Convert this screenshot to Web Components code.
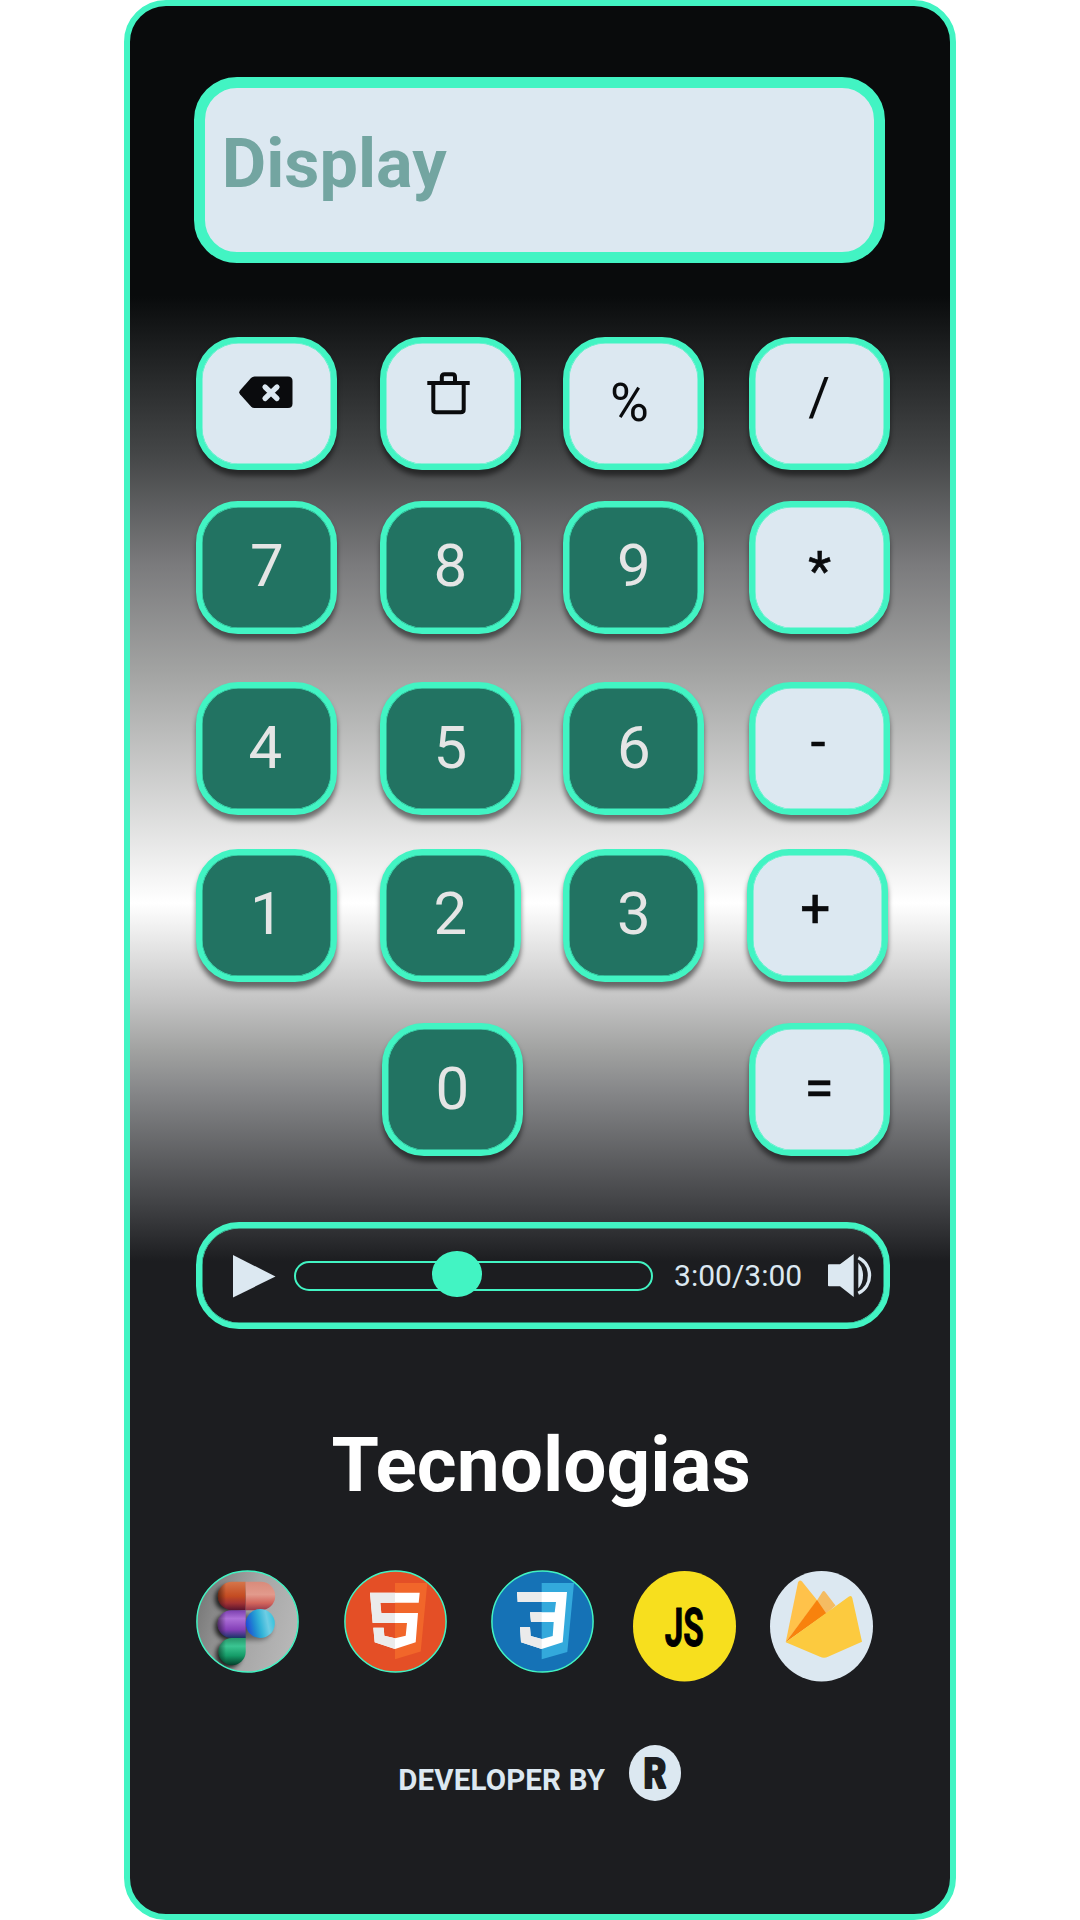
<!DOCTYPE html>
<html lang="pt">
<head>
<meta charset="utf-8">
<title>Calculadora</title>
<style>
html,body{margin:0;padding:0;background:#fff;width:1080px;height:1920px;overflow:hidden}
body{font-family:Roboto,"Liberation Sans",sans-serif;--green:#42f4c3;--ice:#dce8f1;--ink:#0a0b0d;display:flex;justify-content:center}
</style>
</head>
<body>
<calc-app></calc-app>
<script>
const define=(name,html)=>{
  const t=document.createElement('template');
  t.innerHTML=html;
  customElements.define(name,class extends HTMLElement{
    constructor(){super();this.attachShadow({mode:'open'}).append(t.content.cloneNode(true));}
  });
};

define('calc-display',`<style>
:host{display:block;box-sizing:border-box;width:691px;height:186px;border:11px solid var(--green);border-radius:43px;background:var(--ice);
padding:36.700px 0 0 16.500px;font-size:68.400px;line-height:80px;font-weight:700;color:#73a5a1;margin-left:-2px}
</style><slot></slot>`);

define('calc-key',`<style>
:host{display:flex;box-sizing:border-box;justify-content:center;align-items:flex-start;flex:none;width:141px;height:133px;border:6px solid var(--green);border-radius:42px;
background:var(--ice);color:var(--ink);font-size:53px;line-height:60px;padding-top:var(--drop,24px);padding-right:var(--pull,0);box-shadow:inset 0 0 0 .5px var(--green),0 5.500px 5.500px rgba(0,0,0,.5)}
:host([num]){background:#227362;color:#e5e5e5;font-size:60px;line-height:72px;padding-top:23.300px}
:host([sign]){-webkit-text-stroke:.6px var(--ink)}
</style><slot></slot>`);

define('calc-row',`<style>
:host{display:flex;height:133px;gap:42.500px}
</style><slot></slot>`);

define('backspace-icon',`<style>:host{display:block}svg{display:block}</style>
<svg width="54" height="33" viewBox="0 0 54 33"><path d="M15.5 .4H49Q53.5 .4 53.5 5V27.500Q53.500 32 49 32H15.500Q13.500 32 12 30.500L1 18.200Q-.5 16.300 1 14.400L12 2Q13.500 .4 15.500 .4Z" fill="#0a0b0d"/><path d="M26 11L38 22.500M38 11L26 22.500" stroke="#dce8f1" stroke-width="5.200" stroke-linecap="round"/></svg>`);

define('trash-icon',`<style>:host{display:block}svg{display:block}</style>
<svg width="44" height="43" viewBox="0 0 44 43" fill="none" stroke="#0a0b0d"><path d="M.3 11H42.700" stroke-width="4"/><path d="M6.300 11V37.500Q6.300 40.300 9.200 40.300H33.800Q36.700 40.300 36.700 37.500V11" stroke-width="4"/><path d="M14.800 11V5Q14.800 2.200 17.500 2.200H25.500Q28 2.200 28 5V11" stroke-width="4"/></svg>`);

define('audio-player',`<style>
:host{display:flex;box-sizing:border-box;align-items:center;width:693.7px;height:107px;border:6px solid var(--green);border-radius:43px;padding:1px 0 0 31px;color:var(--ice);box-shadow:inset 0 0 0 .5px var(--green)}
svg{display:block;flex:none}
.track{box-sizing:border-box;width:359px;height:30px;border:2px solid var(--green);border-radius:15px;margin-left:18px;display:flex;align-items:center;padding-left:136px}
.knob{width:49.500px;height:45.500px;border-radius:50%;background:var(--green);flex:none;margin-top:-3.500px}
.time{font-size:30px;line-height:36px;width:130px;margin-left:20.800px;white-space:nowrap}
.vol{margin-left:23.500px}
</style>
<svg width="43" height="44" viewBox="0 0 43 44"><path d="M0 1L42.500 22.500L0 43.500Z" fill="#dce8f1"/></svg>
<div class="track"><div class="knob"></div></div>
<span class="time"><slot></slot></span>
<svg class="vol" width="44" height="44" viewBox="0 0 44 44"><g fill="#dce8f1"><path d="M0 11Q0 10.300 1 10.300H12L25.700 0V43L12 32.200H1Q0 32.200 0 31.500Z"/><path d="M30.300 8.500Q35 13.500 35 21.500T30.300 34.500Z"/></g><path d="M30.300 3.800C37.500 7 41.500 14 41.500 21.500S37.500 36 30.300 39.300" fill="none" stroke="#dce8f1" stroke-width="3.400"/></svg>`);

define('section-title',`<style>
:host{display:block;text-align:center;font-size:76.600px;line-height:90px;font-weight:700;color:#fff}
</style><slot></slot>`);

define('figma-badge',`<style>:host,svg{display:block}</style>
<svg width="103" height="103" viewBox="0 0 103 103">
<defs>
<linearGradient id="bg" x1="0" y1=".3" x2="1" y2=".6"><stop offset="0" stop-color="#777"/><stop offset=".5" stop-color="#a5a5a5"/><stop offset="1" stop-color="#b8b8b8"/></linearGradient>
<linearGradient id="rd" x1="0" y1="0" x2="0" y2="1"><stop offset="0" stop-color="#d6754a"/><stop offset=".5" stop-color="#c44c22"/><stop offset=".75" stop-color="#a23232"/><stop offset="1" stop-color="#58132f"/></linearGradient>
<linearGradient id="pk" x1="0" y1="0" x2="0" y2="1"><stop offset="0" stop-color="#d98b7b"/><stop offset=".45" stop-color="#e29a8c"/><stop offset=".75" stop-color="#d2655c"/><stop offset="1" stop-color="#963a4c"/></linearGradient>
<linearGradient id="pu" x1="0" y1="0" x2="0" y2="1"><stop offset="0" stop-color="#7a3fae"/><stop offset=".3" stop-color="#ad70d8"/><stop offset=".7" stop-color="#8440b8"/><stop offset="1" stop-color="#173566"/></linearGradient>
<linearGradient id="gr" x1="0" y1="0" x2="0" y2="1"><stop offset="0" stop-color="#26966a"/><stop offset=".3" stop-color="#3bc592"/><stop offset=".65" stop-color="#159c68"/><stop offset="1" stop-color="#04402c"/></linearGradient>
<linearGradient id="bl" x1="0" y1=".6" x2="1" y2=".4"><stop offset="0" stop-color="#2145d8"/><stop offset=".28" stop-color="#1f8ad2"/><stop offset=".5" stop-color="#33b4d8"/><stop offset=".75" stop-color="#6fcde4"/><stop offset="1" stop-color="#35c3de"/></linearGradient>
<linearGradient id="sh" x1="0" y1="0" x2="1" y2="0"><stop offset="0" stop-color="#000" stop-opacity=".5"/><stop offset=".3" stop-color="#000" stop-opacity="0"/></linearGradient>
<filter id="soft" x="-.5" y="-.5" width="2" height="2"><feGaussianBlur stdDeviation="2.600"/></filter>
<clipPath id="c"><circle cx="51.500" cy="51.500" r="50.500"/></clipPath>
</defs>
<g clip-path="url(#c)"><rect width="103" height="103" fill="url(#bg)"/>
<g filter="url(#soft)" fill="#000" opacity=".8"><rect x="19" y="16" width="32" height="25" rx="12"/><rect x="19" y="44" width="57" height="26" rx="13" opacity=".5"/><rect x="19" y="44" width="30" height="26" rx="13"/><rect x="20" y="72" width="25" height="26" rx="12"/></g>
<path d="M49.700 11.800H36A14.200 14.200 0 0 0 36 40.200H49.700Z" fill="url(#rd)"/>
<path d="M49.700 11.800H65A14.200 14.200 0 0 1 65 40.200H49.700Z" fill="url(#pk)"/>
<path d="M49.700 40.200H35.500A13.900 13.900 0 0 0 35.500 68H49.700Z" fill="url(#pu)"/>
<path d="M49.700 68H36.500A13.600 13.600 0 1 0 49.700 82Z" fill="url(#gr)"/>
<path d="M49.700 11.800H36A14.200 14.200 0 0 0 36 40.200H49.700ZM49.700 40.200H35.500A13.900 13.900 0 0 0 35.500 68H49.700ZM49.700 68H36.500A13.600 13.600 0 1 0 49.700 82Z" fill="url(#sh)"/>
<circle cx="64.300" cy="53.500" r="14.500" fill="url(#bl)"/></g>
<circle cx="51.500" cy="51.500" r="50.600" fill="none" stroke="#42f4c3" stroke-width="1.500"/></svg>`);

define('html-badge',`<style>:host,svg{display:block}</style>
<svg width="103" height="103" viewBox="0 0 103 103"><circle cx="51.500" cy="51.500" r="50.600" fill="#e44f26" stroke="#42f4c3" stroke-width="1.500"/>
<path d="M51 13H83.300L76.700 81.500L51 89.300Z" fill="#f1662a"/>
<path d="M26 22.700H75.700L74.700 32.700H36.300L37.300 43H74L71.700 72.300L51 79L30.700 72.300L29.300 57.700H39.700L40.300 65.700L51 68.300L61.700 65.700L63 53H28.700Z" fill="#fff"/>
<path d="M26 22.700H51V32.700H36.300L37.300 43H51V53H28.700ZM51 68.300V79L30.700 72.300L29.300 57.700H39.700L40.300 65.700Z" fill="#ebebeb"/></svg>`);

define('css-badge',`<style>:host,svg{display:block}</style>
<svg width="103" height="103" viewBox="0 0 103 103"><circle cx="51.500" cy="51.500" r="50.600" fill="#1572b6" stroke="#42f4c3" stroke-width="1.500"/>
<path d="M50.700 13H83L76.300 82L50.700 89.300Z" fill="#33a9dc"/>
<path d="M26 22H76L71.700 72.300L50.700 79L30 72.300L29 57H39L39.700 66L50.700 69L61.700 66L62.700 52H40L39 42.300H63.700L65 32H26.700Z" fill="#fff"/>
<path d="M26 22H50.700V32H26.700ZM39 42.300H50.700V52H40ZM50.700 69V79L30 72.300L29 57H39L39.700 66Z" fill="#ebebeb"/></svg>`);

define('js-badge',`<style>:host,svg{display:block}text{font-family:Roboto,sans-serif;font-weight:700}</style>
<svg width="103" height="110.500" viewBox="0 0 103 110.500"><ellipse cx="51.500" cy="55.200" rx="51.500" ry="55.200" fill="#f7df1e"/>
<text transform="translate(31.700 74.500) scale(.63 1)" font-size="53" textLength="62" lengthAdjust="spacingAndGlyphs" fill="#000" stroke="#000" stroke-width="1" stroke-linejoin="round">JS</text></svg>`);

define('firebase-badge',`<style>:host,svg{display:block}</style>
<svg width="103" height="110.500" viewBox="0 0 103 110.500"><ellipse cx="51.500" cy="55.200" rx="51.500" ry="55.200" fill="#dce8f1"/>
<path d="M46 31L52.300 21Q53.700 19.200 55.200 21L65.500 34.500L56 43Z" fill="#f5bc62"/>
<path d="M15.700 71.300L28 11.500Q29.500 8 32 10.500L47.300 29.500Z" fill="#ffc24a"/>
<path d="M15.700 71.300L47 29L56.300 42.500Z" fill="#f8820d"/>
<path d="M15.700 71.300L79 25.500Q81.500 24 82.300 27L92 70.700L58 85.800Q54 87.500 50 85.800Z" fill="#fcca3f"/></svg>`);

define('tech-list',`<style>
:host{display:flex;align-items:flex-start;gap:44.400px;height:112px}
js-badge{margin:1.500px 0 0 -5px}firebase-badge{margin:1.500px 0 0 -11px}
</style><figma-badge></figma-badge><html-badge></html-badge><css-badge></css-badge><js-badge></js-badge><firebase-badge></firebase-badge>`);

define('dev-credit',`<style>
:host{display:flex;align-items:flex-start;color:var(--ice);font-size:29.500px;line-height:36px;font-weight:700;white-space:nowrap}
span{padding-top:17px;width:231px;letter-spacing:.15px}
svg{display:block}
text{font-family:Roboto,sans-serif;font-weight:900}
</style><span><slot></slot></span>
<svg width="52" height="56" viewBox="0 0 52 56"><ellipse cx="26" cy="28" rx="26" ry="28" fill="#dce8f1"/><text transform="translate(14.500 42.500) scale(.84 1)" font-size="42" fill="#1c1d20" stroke="#1c1d20" stroke-width="1.800" stroke-linejoin="round">R</text></svg>`);

define('calc-app',`<style>
:host{display:flex;flex-direction:column;box-sizing:border-box;width:832px;height:1920px;border:6px solid var(--green);border-radius:42px;padding:70.600px 0 0 66.300px;
background:linear-gradient(#090b0c 0,#090b0c 290px,#454748 450px,#7b7b7d 560px,#a2a3a2 665px,#fff 897px,#c4c4c4 994px,#a1a2a1 1044px,#868789 1085px,#444548 1194px,#1c1d20 1255px);background-color:#1c1d20}
.r1{margin-top:74.200px}.r2{margin-top:31.300px}.r3{margin-top:48.300px}.r4{margin-top:33.700px}.r5{margin-top:41.200px}
.op{margin-left:2.300px}
audio-player{margin-top:65.700px}
section-title{margin:90.700px 64px 0 0}
tech-list{margin-top:60px}
dev-credit{margin:63px 0 0 202px}
</style>
<calc-display>Display</calc-display>
<calc-row class="r1"><calc-key style="--drop:33px;--pull:1.500px"><backspace-icon></backspace-icon></calc-key><calc-key style="--drop:29px;--pull:3px"><trash-icon></trash-icon></calc-key><calc-key style="--drop:30.200px;--pull:9px">%</calc-key><calc-key class="op" style="--drop:24.200px;--pull:1px">/</calc-key></calc-row>
<calc-row class="r2"><calc-key num>7</calc-key><calc-key num>8</calc-key><calc-key num>9</calc-key><calc-key sign class="op" style="--drop:33.500px">*</calc-key></calc-row>
<calc-row class="r3"><calc-key num style="--pull:3px">4</calc-key><calc-key num>5</calc-key><calc-key num>6</calc-key><calc-key sign class="op" style="--drop:24px;--pull:3px">-</calc-key></calc-row>
<calc-row class="r4"><calc-key num>1</calc-key><calc-key num>2</calc-key><calc-key num>3</calc-key><calc-key sign style="--drop:24px;--pull:4px">+</calc-key></calc-row>
<calc-row class="r5"><calc-key num style="margin-left:185.700px">0</calc-key><calc-key sign style="margin-left:183.500px;--drop:30px;--pull:1px">=</calc-key></calc-row>
<audio-player>3:00/3:00</audio-player>
<section-title>Tecnologias</section-title>
<tech-list></tech-list>
<dev-credit>DEVELOPER BY</dev-credit>`);
</script>
</body>
</html>
